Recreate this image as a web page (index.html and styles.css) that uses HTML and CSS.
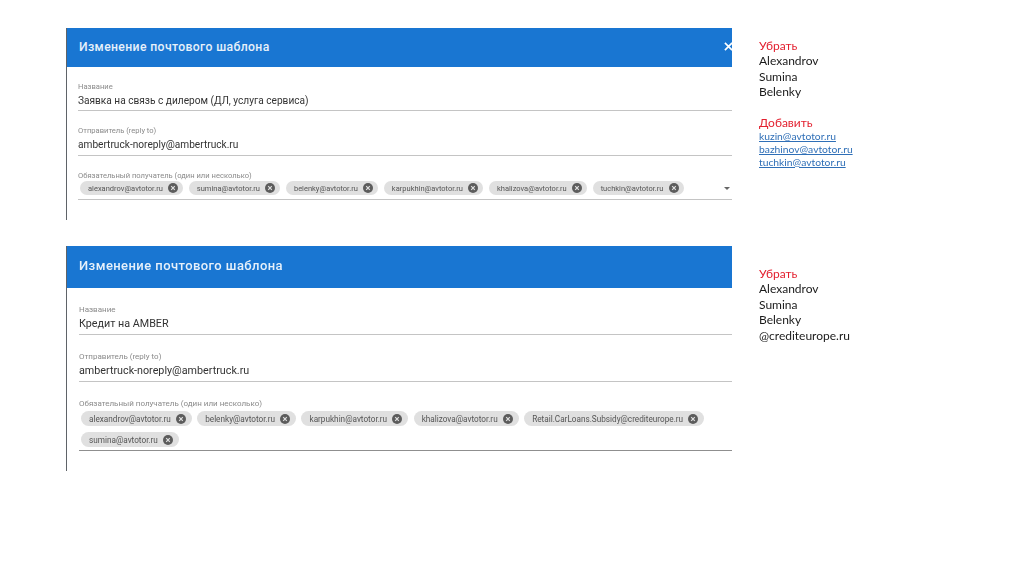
FILE: index.html
```html
<!DOCTYPE html>
<html lang="ru">
<head>
<meta charset="utf-8">
<title>Изменение почтового шаблона</title>
<link rel="stylesheet" href="styles.css">
</head>
<body>
<main class="slide">
  <section class="row row-first">
    <div class="panel panel-small">
      <header class="bar">
        <h2 class="bar-title">Изменение почтового шаблона</h2>
        <svg class="close" viewBox="0 0 10 10"><path d="M1 1L9 9M9 1L1 9"/></svg>
      </header>
      <div class="fields">
        <div class="field">
          <div class="label">Название</div>
          <div class="value">Заявка на связь с дилером (ДЛ, услуга сервиса)</div>
        </div>
        <div class="field field-sender">
          <div class="label">Отправитель (reply to)</div>
          <div class="value">ambertruck-noreply@ambertruck.ru</div>
        </div>
        <div class="field field-chips">
          <div class="label">Обязательный получатель (один или несколько)</div>
          <div class="chips">
            <span class="chip">alexandrov@avtotor.ru<svg class="x" viewBox="0 0 10 10"><circle cx="5" cy="5" r="5"/><path d="M3.2 3.2L6.8 6.8M6.8 3.2L3.2 6.8"/></svg></span>
            <span class="chip">sumina@avtotor.ru<svg class="x" viewBox="0 0 10 10"><circle cx="5" cy="5" r="5"/><path d="M3.2 3.2L6.8 6.8M6.8 3.2L3.2 6.8"/></svg></span>
            <span class="chip">belenky@avtotor.ru<svg class="x" viewBox="0 0 10 10"><circle cx="5" cy="5" r="5"/><path d="M3.2 3.2L6.8 6.8M6.8 3.2L3.2 6.8"/></svg></span>
            <span class="chip">karpukhin@avtotor.ru<svg class="x" viewBox="0 0 10 10"><circle cx="5" cy="5" r="5"/><path d="M3.2 3.2L6.8 6.8M6.8 3.2L3.2 6.8"/></svg></span>
            <span class="chip">khalizova@avtotor.ru<svg class="x" viewBox="0 0 10 10"><circle cx="5" cy="5" r="5"/><path d="M3.2 3.2L6.8 6.8M6.8 3.2L3.2 6.8"/></svg></span>
            <span class="chip">tuchkin@avtotor.ru<svg class="x" viewBox="0 0 10 10"><circle cx="5" cy="5" r="5"/><path d="M3.2 3.2L6.8 6.8M6.8 3.2L3.2 6.8"/></svg></span>
          </div>
          <svg class="caret" viewBox="0 0 6 3"><path d="M0 0H6L3 3Z"/></svg>
        </div>
      </div>
    </div>
    <aside class="notes">
      <div class="note-head">Убрать</div>
      <div>Alexandrov</div>
      <div>Sumina</div>
      <div>Belenky</div>
      <div class="note-head note-gap">Добавить</div>
      <a class="mail" href="#">kuzin@avtotor.ru</a>
      <a class="mail" href="#">bazhinov@avtotor.ru</a>
      <a class="mail" href="#">tuchkin@avtotor.ru</a>
    </aside>
  </section>
  <section class="row row-second">
    <div class="panel panel-large">
      <header class="bar">
        <h2 class="bar-title">Изменение почтового шаблона</h2>
      </header>
      <div class="fields">
        <div class="field">
          <div class="label">Название</div>
          <div class="value">Кредит на AMBER</div>
        </div>
        <div class="field">
          <div class="label">Отправитель (reply to)</div>
          <div class="value">ambertruck-noreply@ambertruck.ru</div>
        </div>
        <div class="field field-chips field-dark">
          <div class="label">Обязательный получатель (один или несколько)</div>
          <div class="chips">
            <span class="chip">alexandrov@avtotor.ru<svg class="x" viewBox="0 0 10 10"><circle cx="5" cy="5" r="5"/><path d="M3.2 3.2L6.8 6.8M6.8 3.2L3.2 6.8"/></svg></span>
            <span class="chip">belenky@avtotor.ru<svg class="x" viewBox="0 0 10 10"><circle cx="5" cy="5" r="5"/><path d="M3.2 3.2L6.8 6.8M6.8 3.2L3.2 6.8"/></svg></span>
            <span class="chip">karpukhin@avtotor.ru<svg class="x" viewBox="0 0 10 10"><circle cx="5" cy="5" r="5"/><path d="M3.2 3.2L6.8 6.8M6.8 3.2L3.2 6.8"/></svg></span>
            <span class="chip">khalizova@avtotor.ru<svg class="x" viewBox="0 0 10 10"><circle cx="5" cy="5" r="5"/><path d="M3.2 3.2L6.8 6.8M6.8 3.2L3.2 6.8"/></svg></span>
            <span class="chip">Retail.CarLoans.Subsidy@crediteurope.ru<svg class="x" viewBox="0 0 10 10"><circle cx="5" cy="5" r="5"/><path d="M3.2 3.2L6.8 6.8M6.8 3.2L3.2 6.8"/></svg></span>
            <span class="chip">sumina@avtotor.ru<svg class="x" viewBox="0 0 10 10"><circle cx="5" cy="5" r="5"/><path d="M3.2 3.2L6.8 6.8M6.8 3.2L3.2 6.8"/></svg></span>
          </div>
        </div>
      </div>
    </div>
    <aside class="notes notes-low">
      <div class="note-head">Убрать</div>
      <div>Alexandrov</div>
      <div>Sumina</div>
      <div>Belenky</div>
      <div>@crediteurope.ru</div>
    </aside>
  </section>
</main>
</body>
</html>
```
FILE: styles.css
```css
* { box-sizing: border-box; }
html, body { margin: 0; padding: 0; background: #fff; }
body { width: 1024px; height: 574px; overflow: hidden; font-family: Roboto, "Liberation Sans", sans-serif; }
.slide { display: flex; flex-direction: column; padding: 28px 0 0 66px; filter: blur(0.4px); }
.row { display: flex; align-items: flex-start; }
.row-second { margin-top: 26px; }
.panel { width: 666px; border-left: 1px solid #5f6368; flex: none; }
.panel-small { height: 192px; }
.panel-large { height: 225px; }
.bar { display: flex; align-items: center; justify-content: space-between; background: #1976d2; color: #fff; height: 39px; padding: 0 0 2px 12px; overflow: hidden; }
.panel-large .bar { height: 42px; padding: 0 0 3px 12px; }
.bar-title { margin: 0; font-size: 12.2px; font-weight: 500; letter-spacing: 0.38px; color: #e6f0fa; }
.panel-large .bar-title { font-size: 13px; letter-spacing: 0.43px; }
.close { width: 9px; height: 9px; margin-right: -1px; flex: none; }
.close path { stroke: #fff; stroke-width: 1.8; fill: none; }
.fields { padding: 15px 0 0 11px; }
.panel-large .fields { padding: 17px 0 0 12px; }
.field { position: relative; border-bottom: 1px solid #c4c4c4; height: 29px; margin-bottom: 15px; }
.field-sender { height: 30px; }
.panel-large .field { height: 30px; margin-bottom: 17px; }
.label { font-size: 7.6px; line-height: 9px; color: #8a8a8a; white-space: nowrap; }
.panel-large .label { font-size: 8px; }
.value { font-size: 10.13px; line-height: 14px; margin-top: 3px; color: #333; white-space: nowrap; }
.panel-large .value { font-size: 10.75px; line-height: 15px; margin-top: 2px; }
.field.field-chips { height: auto; padding-bottom: 4px; margin-bottom: 0; }
.panel-large .field.field-chips { height: auto; padding-bottom: 3px; }
.field-dark { border-bottom-color: #8f8f8f !important; }
.chips { display: flex; flex-wrap: wrap; gap: 6px; margin-top: 1px; padding-left: 2px; }
.panel-large .chips { margin-top: 3px; gap: 6px 5.5px; }
.chip { display: inline-flex; align-items: center; height: 14px; padding: 0 5px 0 8px; border-radius: 7px; background: #e0e0e0; font-size: 7.5px; color: #555; white-space: nowrap; }
.panel-large .chip { height: 15px; border-radius: 8px; font-size: 8.2px; padding-right: 6px; }
.x { width: 10px; height: 10px; margin-left: 5px; flex: none; }
.x circle { fill: #5c5c5c; }
.x path { stroke: #e0e0e0; stroke-width: 1.2; fill: none; }
.caret { position: absolute; right: 2px; bottom: 9px; width: 6px; height: 3px; }
.caret path { fill: #666; }
.notes { display: flex; flex-direction: column; margin: 10px 0 0 27px; font-family: Lato, "Open Sans", sans-serif; font-size: 12px; line-height: 15.4px; color: #1a1a1a; }
.notes-low { margin-top: 20px; }
.note-head { color: #e3202f; }
.note-gap { margin-top: 15px; }
.mail { color: #2f6fb7; text-decoration: underline; font-size: 10.3px; line-height: 12.8px; }
```
